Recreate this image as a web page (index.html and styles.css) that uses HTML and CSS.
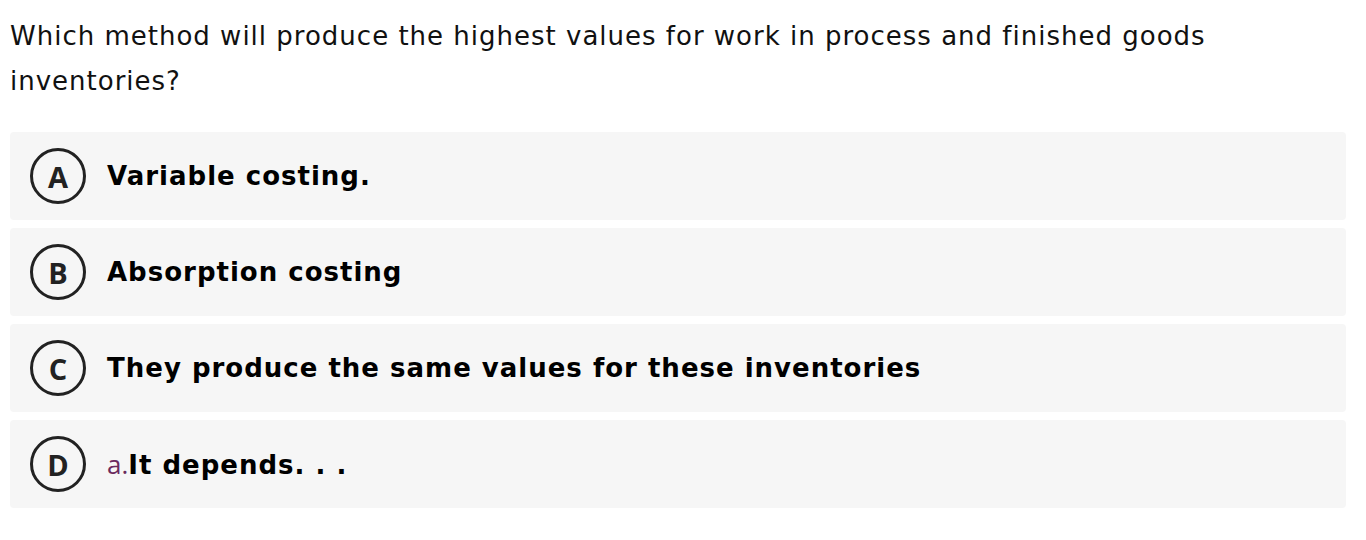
FILE: index.html
```html
<!DOCTYPE html>
<html lang="en">
<head>
<meta charset="utf-8">
<title>Question</title>
<link rel="stylesheet" href="styles.css">
</head>
<body>
<div class="page">
  <p class="question">Which method will produce the highest values for work in process and finished goods inventories?</p>
  <ul class="options">
    <li class="option"><span class="letter">A</span><span class="answer">Variable costing.</span></li>
    <li class="option"><span class="letter">B</span><span class="answer">Absorption costing</span></li>
    <li class="option"><span class="letter">C</span><span class="answer">They produce the same values for these inventories</span></li>
    <li class="option"><span class="letter">D</span><span class="answer"><span class="prefix">a.</span>It depends. . .</span></li>
  </ul>
</div>
</body>
</html>
```

FILE: styles.css
```css
html, body {
  margin: 0;
  padding: 0;
  background: #ffffff;
}

.page {
  padding: 14px 20px 0 10px;
}

.question {
  margin: 0;
  font-family: "DejaVu Sans", Verdana, sans-serif;
  font-size: 26px;
  line-height: 45px;
  letter-spacing: 1px;
  font-variant-ligatures: none;
  color: #111111;
}

.options {
  list-style: none;
  margin: 28px 0 0 0;
  padding: 0;
  display: flex;
  flex-direction: column;
  gap: 8px;
}

.option {
  display: flex;
  align-items: center;
  gap: 21px;
  height: 88px;
  box-sizing: border-box;
  padding-left: 20px;
  background: #f6f6f6;
  border-radius: 4px;
}

.letter {
  flex: none;
  width: 56px;
  height: 56px;
  box-sizing: border-box;
  border: 3px solid #222222;
  border-radius: 50%;
  display: flex;
  align-items: center;
  justify-content: center;
  font-family: "Open Sans", "Noto Sans", sans-serif;
  font-weight: 700;
  font-size: 29px;
  color: #222222;
}

.answer {
  font-family: "DejaVu Sans", Verdana, sans-serif;
  font-weight: bold;
  font-size: 26px;
  letter-spacing: 1px;
  color: #000000;
}

.prefix {
  font-family: "Open Sans", "Noto Sans", sans-serif;
  font-weight: 400;
  font-size: 26px;
  letter-spacing: 0;
  color: #6b2a5e;
}
```
